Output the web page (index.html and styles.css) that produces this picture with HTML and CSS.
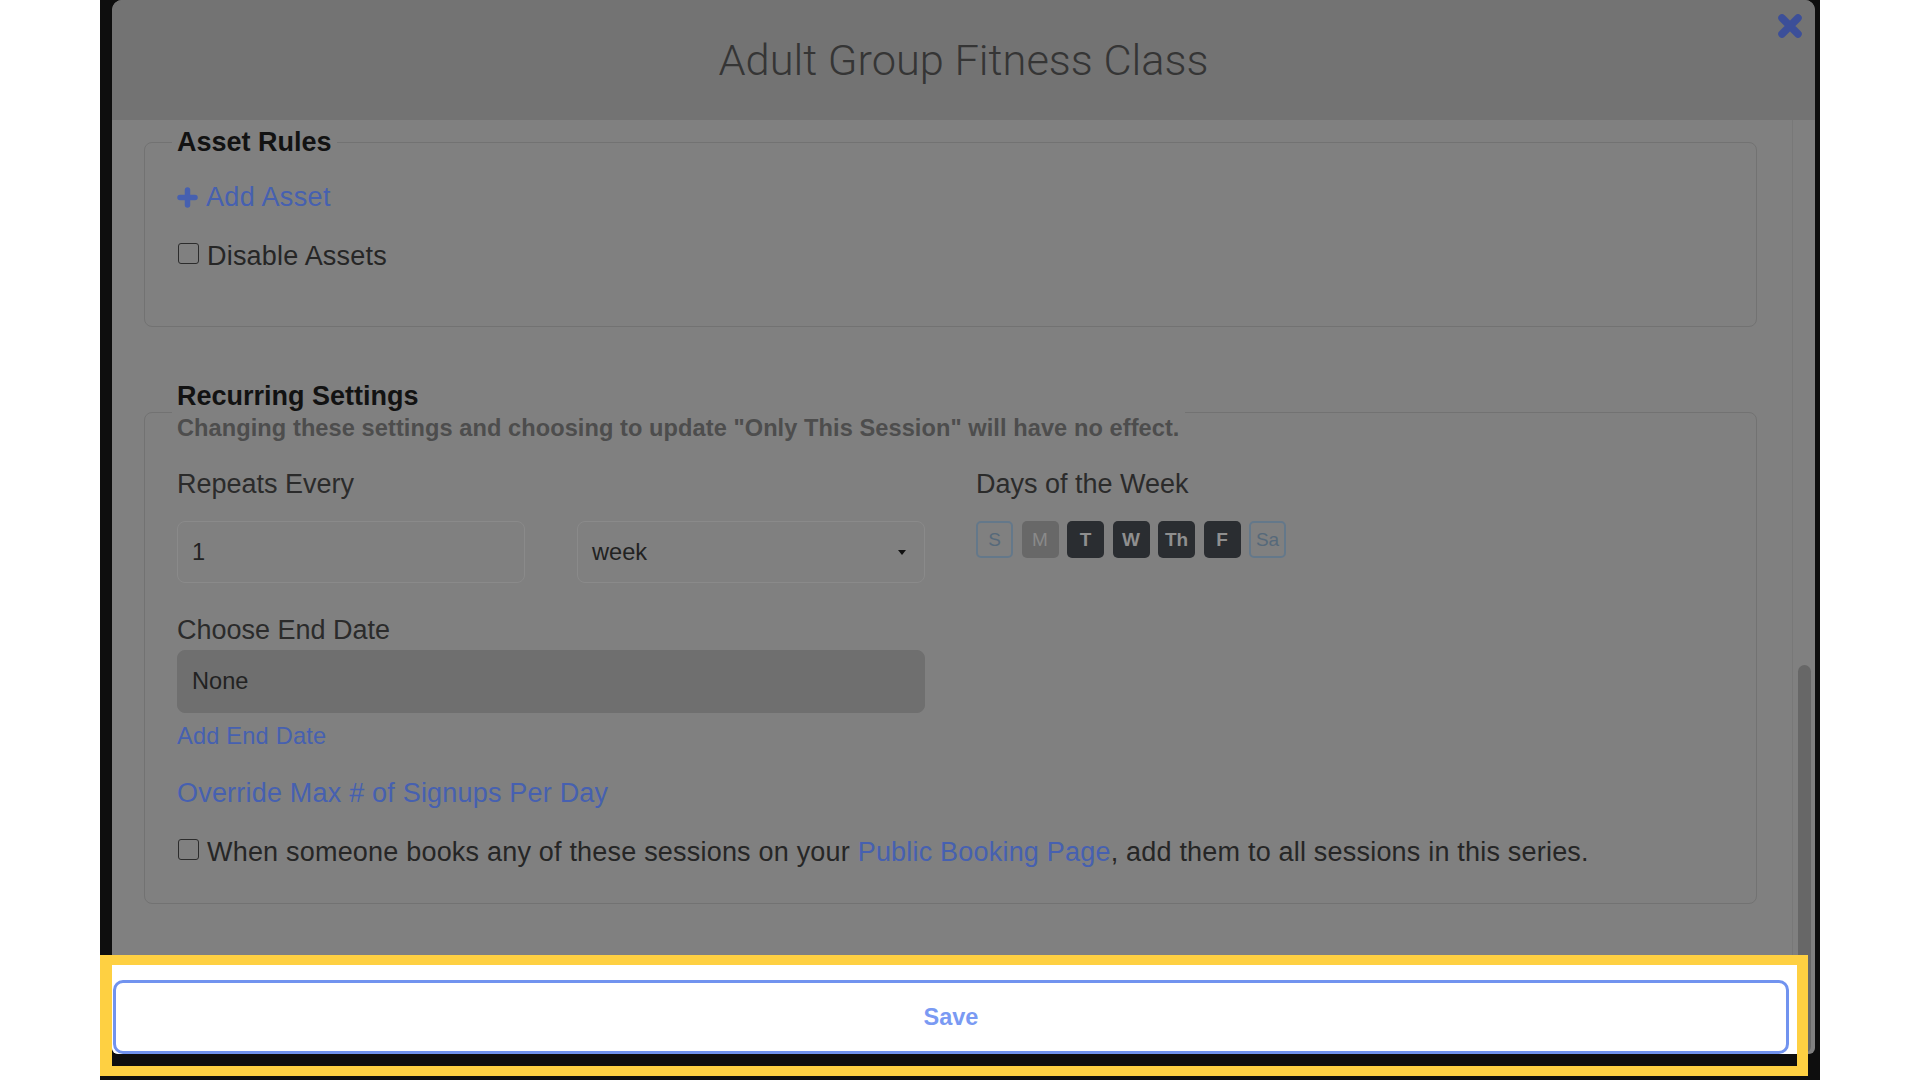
FILE: index.html
```html
<!DOCTYPE html>
<html lang="en">

<head>
    <meta charset="UTF-8">
    <meta name="viewport" content="width=device-width, initial-scale=1.0">
    <title>Adult Group Fitness Class</title>
    <link rel="stylesheet" href="styles.css">
</head>

<body>
    <div class="screen">
        <div class="modal">
            <div class="modal-header">
                <h1 class="modal-title">Adult Group Fitness Class</h1>
                <span class="close-btn">
                    <svg width="26" height="26" viewBox="0 0 26 26">
                        <path d="M5 5 L21 21 M21 5 L5 21" stroke="#3c4f99" stroke-width="7.5" stroke-linecap="round" fill="none" />
                    </svg>
                </span>
            </div>
            <div class="modal-main">
                <div class="modal-body">
                    <fieldset class="group group-assets">
                        <legend>Asset Rules</legend>
                        <a class="link add-asset">
                            <svg width="21" height="21" viewBox="0 0 21 21">
                                <path d="M10.5 3 V18 M3 10.5 H18" stroke="#4660b0" stroke-width="5.5" stroke-linecap="round" fill="none" />
                            </svg>
                            Add Asset
                        </a>
                        <label class="check-row"><input type="checkbox" class="check"><span>Disable Assets</span></label>
                    </fieldset>

                    <fieldset class="group group-recurring">
                        <legend>
                            <span class="legend-title">Recurring Settings</span>
                            <small class="legend-note">Changing these settings and choosing to update "Only This Session" will have no effect.</small>
                        </legend>
                        <div class="form-row">
                            <div class="form-col">
                                <div class="field-label">Repeats Every</div>
                                <div class="repeat-inputs">
                                    <div class="control">1</div>
                                    <div class="control control-select">
                                        <span>week</span>
                                        <svg width="8" height="5" viewBox="0 0 8 5">
                                            <path d="M0 0 H8 L4 5 Z" fill="#111" />
                                        </svg>
                                    </div>
                                </div>
                            </div>
                            <div class="form-col">
                                <div class="field-label">Days of the Week</div>
                                <div class="days">
                                    <span class="day day-outline">S</span>
                                    <span class="day day-muted">M</span>
                                    <span class="day day-dark">T</span>
                                    <span class="day day-dark">W</span>
                                    <span class="day day-dark">Th</span>
                                    <span class="day day-dark">F</span>
                                    <span class="day day-outline">Sa</span>
                                </div>
                            </div>
                        </div>
                        <div class="end-date">
                            <div class="field-label end-label">Choose End Date</div>
                            <div class="control control-disabled">None</div>
                            <a class="link small-link">Add End Date</a>
                        </div>
                        <a class="link override-link">Override Max # of Signups Per Day</a>
                        <label class="check-row series-row">
                            <input type="checkbox" class="check">
                            <span>When someone books any of these sessions on your <a class="inline-link">Public Booking Page</a>, add them to all sessions in this series.</span>
                        </label>
                    </fieldset>
                </div>
                <div class="modal-footer">
                    <button class="save-btn">Save</button>
                </div>
                <div class="scroll-track">
                    <div class="scroll-thumb"></div>
                </div>
            </div>
        </div>
        <div class="highlight"></div>
    </div>
</body>

</html>
```

FILE: styles.css
```css
* {
    box-sizing: border-box;
}

body {
    margin: 0;
    background: #fff;
    font-family: "Liberation Sans", Arial, sans-serif;
}

/* dark window behind the modal */
.screen {
    position: relative;
    width: 1720px;
    height: 1080px;
    margin-left: 100px;
    padding: 0 5px 0 12px;
    background: #0e0e0e;
}

.modal {
    height: 1054px;
    display: flex;
    flex-direction: column;
    border-radius: 10px 10px 6px 6px;
    overflow: hidden;
    background: #808080;
}

.modal-header {
    position: relative;
    flex: none;
    height: 120px;
    padding-top: 2px;
    display: flex;
    align-items: center;
    justify-content: center;
    background: #737373;
}

.modal-title {
    margin: 0;
    font-family: Roboto, sans-serif;
    font-weight: 300;
    font-size: 43.4px;
    line-height: 1;
    color: #353535;
}

.close-btn {
    position: absolute;
    top: 13px;
    right: 12px;
    width: 26px;
    height: 26px;
}

.close-btn svg {
    display: block;
}

.modal-main {
    flex: 1;
    min-height: 0;
    display: grid;
    grid-template-columns: 1fr 23px;
    grid-template-rows: 1fr 89px;
}

.modal-body {
    grid-column: 1;
    grid-row: 1;
    padding: 6px 35px 0 32px;
}

/* fieldsets */
.group {
    margin: 0;
    min-width: 0;
    padding: 18px 32px 50px;
    border: 1px solid #727272;
    border-radius: 8px;
}

.group legend {
    padding: 0 5px;
    margin-left: -5px;
    font-size: 27px;
    font-weight: bold;
    line-height: 33px;
    color: #121212;
}

.group-assets {
    margin-bottom: 53px;
}

.group-recurring {
    padding-top: 20px;
    padding-bottom: 31px;
}

.legend-title {
    display: block;
}

.legend-note {
    display: block;
    font-size: 23.6px;
    line-height: 31px;
    letter-spacing: 0.07px;
    color: #4d4d4d;
}

.link {
    display: block;
    color: #4660b0;
    text-decoration: none;
    letter-spacing: 0.2px;
}

.inline-link {
    color: #4660b0;
}

.add-asset {
    display: flex;
    align-items: center;
    margin-bottom: 19px;
    font-size: 27px;
    line-height: 40px;
    letter-spacing: 0.35px;
}

.add-asset svg {
    margin-right: 8px;
}

.check-row {
    display: flex;
    align-items: flex-start;
    font-size: 27px;
    line-height: 40px;
    letter-spacing: 0.2px;
    color: #262626;
}

.check {
    appearance: none;
    flex: none;
    width: 21px;
    height: 21px;
    margin: 7px 8px 0 1px;
    border: 1.5px solid #2c2c2c;
    border-radius: 3px;
    background: transparent;
}

.form-row {
    display: grid;
    grid-template-columns: 748px 1fr;
    column-gap: 51px;
    margin-bottom: 27px;
}

.field-label {
    margin-bottom: 17px;
    font-size: 27px;
    line-height: 40px;
    color: #2b2b2b;
}

.repeat-inputs {
    display: grid;
    grid-template-columns: 1fr 1fr;
    column-gap: 52px;
}

.control {
    display: flex;
    align-items: center;
    height: 62px;
    padding: 0 14px;
    border: 1px solid #8a8a8a;
    border-radius: 8px;
    font-size: 23.6px;
    color: #222;
}

.control-select {
    justify-content: space-between;
    padding-right: 18px;
}

.control-disabled {
    height: 63px;
    background: #6f6f6f;
    border-color: #6f6f6f;
}

.days {
    display: flex;
    gap: 8.5px;
}

.day {
    display: flex;
    align-items: center;
    justify-content: center;
    width: 37px;
    height: 37px;
    border-radius: 5px;
    font-size: 19px;
}

.day-outline {
    border: 2px solid #64788a;
    color: #56697a;
}

.day-muted {
    background: #686868;
    color: #8a8a8a;
}

.day-dark {
    background: #2a2d31;
    color: #8f8f8f;
    font-weight: bold;
}

.end-date {
    width: 748px;
}

.end-label {
    margin-bottom: 0;
}

.small-link {
    margin-top: 6px;
    font-size: 23.6px;
    line-height: 35px;
}

.override-link {
    margin-top: 19px;
    font-size: 27px;
    line-height: 40px;
}

.series-row {
    margin-top: 19px;
}

/* footer with the save button (spotlighted) */
.modal-footer {
    position: relative;
    z-index: 1;
    grid-column: 1;
    grid-row: 2;
    margin-right: -5px;
    padding: 15px 8px 0 1px;
    background: #fff;
}

.save-btn {
    display: block;
    width: 100%;
    height: 74px;
    border: 3px solid #7193ef;
    border-radius: 10px;
    background: #fff;
    font-family: "Liberation Sans", Arial, sans-serif;
    font-size: 23.5px;
    font-weight: bold;
    color: #7a9af3;
}

.scroll-track {
    grid-column: 2;
    grid-row: 1 / 3;
    display: flex;
    flex-direction: column;
    justify-content: flex-end;
    padding: 0 0 1px 5px;
    border-left: 1px solid #787878;
}

.scroll-thumb {
    width: 13px;
    height: 388px;
    border-radius: 7px;
    background: #676767;
}

/* yellow annotation box */
.highlight {
    position: absolute;
    left: 0;
    top: 955px;
    width: 1708px;
    height: 121px;
    border-style: solid;
    border-color: #fed042;
    border-width: 10px 11px 10px 12px;
    z-index: 2;
}
```
